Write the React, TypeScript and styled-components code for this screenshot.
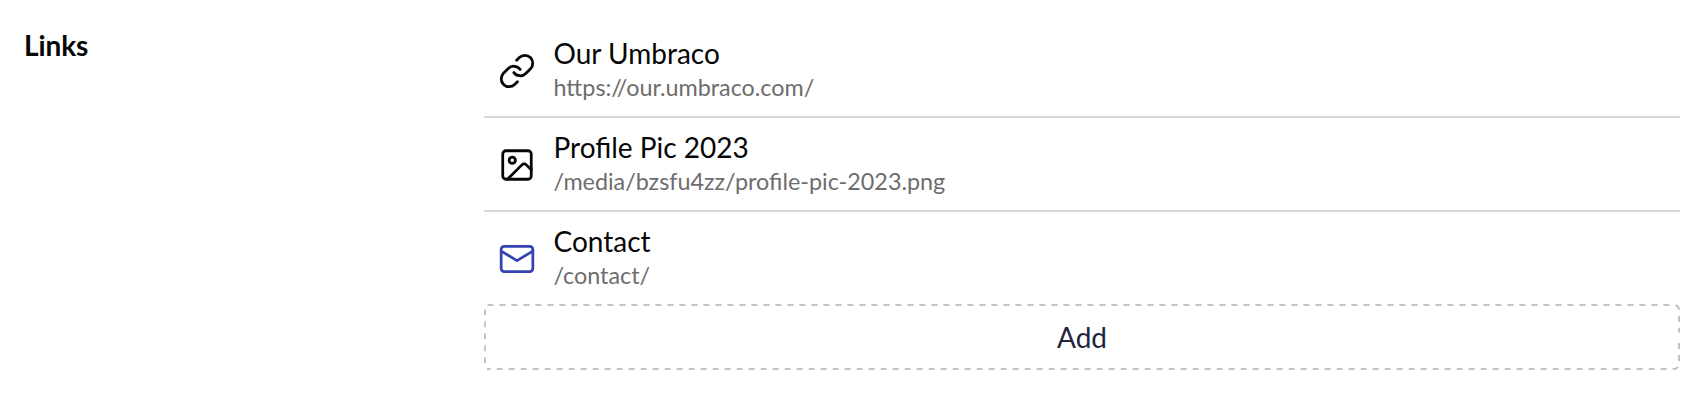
import React from "react";
import styled, { createGlobalStyle } from "styled-components";

const GlobalStyle = createGlobalStyle`
  * { box-sizing: border-box; }
  body { margin: 0; background: #fff; font-family: Lato, sans-serif; color: #060606; }
`;

const Property = styled.section`
  display: grid;
  grid-template-columns: 460px 1fr;
  padding: 22px 22px 30px 24px;
  height: 400px;
`;

const Label = styled.h2`
  margin: 7px 0 0;
  font-size: 28px;
  line-height: 32px;
  font-weight: 700;
  letter-spacing: -0.1px;
`;

const Editor = styled.div`
  display: flex;
  flex-direction: column;
`;

const Row = styled.div<{ $divided: boolean }>`
  display: flex;
  align-items: center;
  gap: 17.5px;
  height: 94px;
  padding: 0 14px;
  border-top: 2px solid ${(p) => (p.$divided ? "#d8d7d9" : "transparent")};
`;

const Icon = styled.svg<{ $color: string }>`
  width: 38px;
  height: 38px;
  margin-top: 2px;
  fill: none;
  stroke: ${(p) => p.$color};
  stroke-width: 1.75;
  stroke-linecap: round;
  stroke-linejoin: round;
`;

const Detail = styled.div`
  display: flex;
  flex-direction: column;
`;

const Name = styled.div`
  font-size: 28px;
  line-height: 34px;
`;

const Url = styled.div`
  font-size: 23.35px;
  line-height: 34px;
  color: #6d6d6d;
`;

const AddButton = styled.button`
  position: relative;
  height: 66px;
  border: 0;
  border-radius: 6px;
  background: transparent;
  color: #1e2340;
  font: 28px Lato, sans-serif;
`;

const DashedOutline = styled.svg`
  position: absolute;
  inset: 0;
  width: 100%;
  height: 100%;
  fill: none;
  stroke: #c4c4c4;
  stroke-width: 2;
  stroke-dasharray: 6 6;
`;

const links = [
  {
    name: "Our Umbraco", url: "https://our.umbraco.com/", color: "#060606",
    icon: <><path d="M10 13a5 5 0 0 0 7.54.54l3-3a5 5 0 0 0-7.07-7.07l-1.72 1.71" /><path d="M14 11a5 5 0 0 0-7.54-.54l-3 3a5 5 0 0 0 7.07 7.07l1.71-1.71" /></>,
  },
  {
    name: "Profile Pic 2023", url: "/media/bzsfu4zz/profile-pic-2023.png", color: "#060606",
    icon: <><rect x="3" y="3" width="18" height="18" rx="2" /><circle cx="9" cy="9" r="2" /><path d="m21 15-3.086-3.086a2 2 0 0 0-2.828 0L6 21" /></>,
  },
  {
    name: "Contact", url: "/contact/", color: "#3544b1",
    icon: <><rect x="2" y="4" width="20" height="16" rx="2" /><path d="m22 7-10 6L2 7" /></>,
  },
];

export default function App() {
  return (
    <>
      <GlobalStyle />
      <Property>
        <Label>Links</Label>
        <Editor>
          {links.map((link, i) => (
            <Row key={link.url} $divided={i > 0}>
              <Icon viewBox="0 0 24 24" $color={link.color}>{link.icon}</Icon>
              <Detail><Name>{link.name}</Name><Url>{link.url}</Url></Detail>
            </Row>
          ))}
          <AddButton>
            <DashedOutline viewBox="0 0 1196 66">
              <path d="M3.5 1H1190A5 5 0 0 1 1195 6V28.5" />
              <path d="M1195 39V60A5 5 0 0 1 1190 65H3" />
              <path d="M1 59.3V5.5" />
            </DashedOutline>
            Add
          </AddButton>
        </Editor>
      </Property>
    </>
  );
}
